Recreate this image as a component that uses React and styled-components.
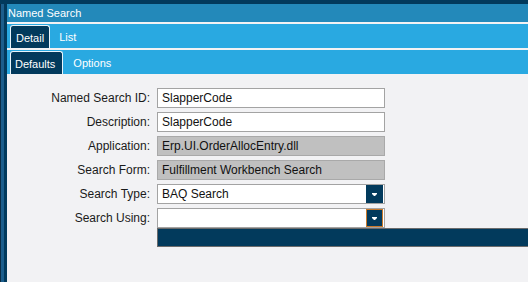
import React from "react";
import styled, { createGlobalStyle } from "styled-components";

const GlobalStyle = createGlobalStyle`
  html, body {
    margin: 0;
    padding: 0;
    background: #f2f2f4;
    font-family: "Liberation Sans", Arial, sans-serif;
  }
`;

const Window = styled.div`
  width: 528px;
  height: 282px;
  display: flex;
  flex-direction: column;
  overflow: hidden;
  background: #f2f2f4;
`;

const TopStrip = styled.div`
  height: 4px;
  flex: none;
  background: #023a5c;
`;

const Body = styled.div`
  flex: 1;
  display: flex;
  min-height: 0;
`;

const SideRail = styled.div`
  width: 7px;
  flex: none;
  background: linear-gradient(
    to right,
    #0c2d45 0 1px,
    #1c5e8c 1px 4px,
    #023a5c 4px 7px
  );
`;

const Main = styled.div`
  flex: 1;
  display: flex;
  flex-direction: column;
  min-width: 0;
`;

const TitleBar = styled.div`
  height: 18px;
  background: #2389ba;
  color: #fff;
  font-size: 11px;
  line-height: 18px;
  padding-left: 1px;
  border-bottom: 2px solid #f2f2f4;
`;

const TabBar = styled.div`
  height: 24px;
  display: flex;
  align-items: flex-end;
  background: #29a9e1;
  padding-left: 3px;
  border-bottom: ${(p) => (p.$gap ? "2px solid #f2f2f4" : "none")};
`;

const Tab = styled.div`
  height: ${(p) => (p.$active ? "23px" : "24px")};
  box-sizing: border-box;
  display: flex;
  align-items: center;
  padding: ${(p) => (p.$active ? 1 : 2)}px ${(p) => p.$pr}px 0 ${(p) => p.$pl}px;
  font-size: 11px;
  color: #fff;
  background: ${(p) => (p.$active ? "#023a5c" : "transparent")};
  border: ${(p) => (p.$active ? "1px solid #e8f4fb" : "none")};
  border-bottom: none;
  border-radius: 3px 3px 0 0;
`;

const Form = styled.div`
  position: relative;
  display: grid;
  grid-template-columns: 143px 228px;
  grid-auto-rows: 20px;
  column-gap: 7px;
  row-gap: 4px;
  padding-top: 14px;
  align-items: center;
`;

const Label = styled.div`
  text-align: right;
  font-size: 12px;
  color: #1a1a1a;
  white-space: nowrap;
`;

const Field = styled.div`
  height: 20px;
  box-sizing: border-box;
  display: flex;
  align-items: center;
  border: 1px solid ${(p) => (p.$readOnly ? "#a9a9a9" : "#a3a3a3")};
  background: ${(p) => (p.$readOnly ? "#c0c0c0" : "#fff")};
  padding: 0 1px 0 4px;
  font-size: 12px;
  color: #111;
  white-space: nowrap;
`;

const FieldText = styled.span`
  flex: 1;
`;

const DropButton = styled.div`
  width: 17px;
  height: 18px;
  box-sizing: border-box;
  flex: none;
  display: flex;
  align-items: center;
  justify-content: center;
  background: #023a5c;
  border: 1px solid ${(p) => (p.$focused ? "#c8792b" : "#023a5c")};
`;

const DropList = styled.div`
  position: absolute;
  left: 150px;
  right: -21px;
  top: 154px;
  height: 19px;
  box-sizing: border-box;
  background: #023a5c;
  border-top: 1px solid #6b6b6b;
  border-bottom: 1px solid #6b6b6b;
  border-left: 1px solid #6b6b6b;
`;

const Arrow = () => (
  <svg width="5" height="3" viewBox="0 0 5 3">
    <path d="M0 0H5V1L3 3H2L0 1Z" fill="#fff" />
  </svg>
);

const rows = [
  { label: "Named Search ID:", value: "SlapperCode" },
  { label: "Description:", value: "SlapperCode" },
  { label: "Application:", value: "Erp.UI.OrderAllocEntry.dll", readOnly: true },
  { label: "Search Form:", value: "Fulfillment Workbench Search", readOnly: true },
  { label: "Search Type:", value: "BAQ Search", combo: true },
  { label: "Search Using:", value: "", combo: true, focused: true },
];

export default function App() {
  return (
    <Window>
      <GlobalStyle />
      <TopStrip />
      <Body>
        <SideRail />
        <Main>
          <TitleBar>Named Search</TitleBar>
          <TabBar $gap>
            <Tab $active $pl={5} $pr={5}>Detail</Tab>
            <Tab $pl={9} $pr={9}>List</Tab>
          </TabBar>
          <TabBar>
            <Tab $active $pl={4} $pr={7}>Defaults</Tab>
            <Tab $pl={10} $pr={10}>Options</Tab>
          </TabBar>
          <Form>
            {rows.map((r) => (
              <React.Fragment key={r.label}>
                <Label>{r.label}</Label>
                <Field $readOnly={r.readOnly}>
                  <FieldText>{r.value}</FieldText>
                  {r.combo && (
                    <DropButton $focused={r.focused}>
                      <Arrow />
                    </DropButton>
                  )}
                </Field>
              </React.Fragment>
            ))}
            <DropList />
          </Form>
        </Main>
      </Body>
    </Window>
  );
}
